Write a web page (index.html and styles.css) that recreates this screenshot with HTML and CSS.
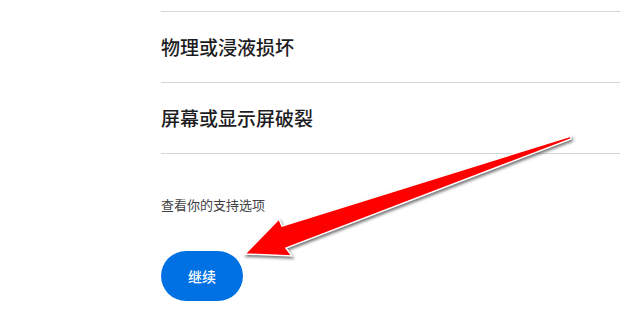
FILE: index.html
```html
<!DOCTYPE html>
<html lang="zh-CN">
<head>
    <meta charset="UTF-8">
    <title>支持选项</title>
    <link rel="stylesheet" href="styles.css">
</head>
<body>
    <div class="page">
        <ul class="topic-list">
            <li class="topic">物理或浸液损坏</li>
            <li class="topic">屏幕或显示屏破裂</li>
        </ul>

        <p class="support-note">查看你的支持选项</p>

        <button class="continue-btn">继续</button>
    </div>

    <!-- annotation arrow drawn over the screenshot -->
    <svg class="annotation" width="620" height="309" viewBox="0 0 620 309">
        <polygon class="arrow" points="571,136 282,226 279,219 245,254 292,256 286,248 571,139"/>
    </svg>
</body>
</html>
```

FILE: styles.css
```css
:root {
    --text-color: #1d1d1f;
    --muted-color: #424245;
    --divider: #d6d6d6;
    --blue: #0071e3;
}

body {
    margin: 0;
    background: white;
    font-family: "Noto Sans CJK SC", "Noto Sans", sans-serif;
    color: var(--text-color);
    position: relative;
    width: 620px;
    height: 309px;
    overflow: hidden;
}

.page {
    padding: 11px 0 0 161px;
}

.topic-list {
    list-style: none;
    margin: 0;
    padding: 0;
    border-bottom: 1px solid var(--divider);
}

.topic {
    border-top: 1px solid var(--divider);
    height: 70px;
    display: flex;
    align-items: center;
    font-size: 19px;
    font-weight: 500;
    line-height: 24px;
}

.support-note {
    margin: 41px 0 0;
    font-size: 13px;
    line-height: 20px;
    color: var(--muted-color);
}

.continue-btn {
    margin-top: 36px;
    width: 82px;
    height: 50px;
    border: none;
    border-radius: 25px;
    background: var(--blue);
    color: white;
    font-family: inherit;
    font-size: 14px;
    font-weight: 500;
    padding: 0;
}

.annotation {
    position: absolute;
    top: 0;
    left: 0;
    filter: drop-shadow(1px 2px 1.5px rgba(0, 0, 0, 0.55));
}

.arrow {
    fill: #ff0000;
    stroke: white;
    stroke-width: 1.5;
    stroke-linejoin: miter;
}
```
